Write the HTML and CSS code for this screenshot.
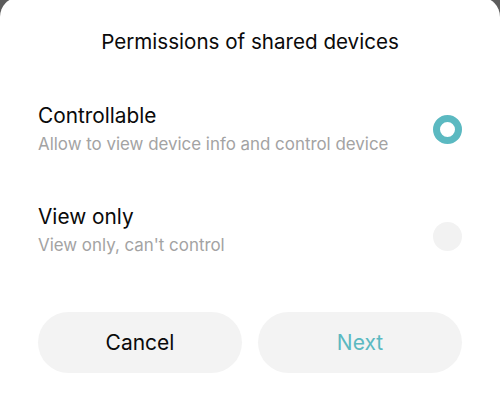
FILE: index.html
```html
<!DOCTYPE html>
<html lang="en">
<head>
<meta charset="utf-8">
<title>Permissions of shared devices</title>
<link rel="stylesheet" href="styles.css">
</head>
<body>
<div class="sheet">
  <h1 class="title">Permissions of shared devices</h1>
  <div class="options">
    <div class="option">
      <div class="option-text">
        <div class="option-name">Controllable</div>
        <div class="option-desc">Allow to view device info and control device</div>
      </div>
      <span class="radio radio-on"></span>
    </div>
    <div class="option option-second">
      <div class="option-text">
        <div class="option-name">View only</div>
        <div class="option-desc">View only, can't control</div>
      </div>
      <span class="radio"></span>
    </div>
  </div>
  <div class="actions">
    <button class="btn btn-cancel">Cancel</button>
    <button class="btn btn-next">Next</button>
  </div>
</div>
</body>
</html>
```
FILE: styles.css
```css
html, body {
  margin: 0;
  padding: 0;
  background: #5c5c5c;
}
body {
  font-family: Inter, Roboto, "Liberation Sans", sans-serif;
  overflow: hidden;
}
.sheet {
  margin-top: -3px;
  background: #ffffff;
  border-radius: 20px 20px 0 0;
  min-height: 420px;
  padding: 31px 38px 0;
  box-sizing: border-box;
}
.title {
  margin: 0;
  font-size: 20.6px;
  line-height: 28px;
  font-weight: 400;
  color: #0a0a0a;
  text-align: center;
}
.options {
  display: flex;
  flex-direction: column;
  gap: 49px;
  margin-top: 47px;
}
.option {
  display: flex;
  align-items: center;
  justify-content: space-between;
}
.option-name {
  font-size: 20.8px;
  line-height: 26px;
  color: #0a0a0a;
}
.option-desc {
  margin-top: 4px;
  font-size: 16.9px;
  line-height: 22px;
  color: #a3a3a3;
}
.radio {
  width: 29px;
  height: 29px;
  border-radius: 50%;
  background: #f2f2f2;
  box-sizing: border-box;
  flex: none;
}
.radio-on {
  background: #ffffff;
  border: 7.5px solid #5bb9c1;
}
.option-second .radio {
  margin-top: 13px;
}
.actions {
  display: flex;
  gap: 16px;
  margin-top: 56px;
}
.btn {
  flex: 1;
  height: 61px;
  border: none;
  border-radius: 31px;
  background: #f3f3f3;
  font-family: inherit;
  font-size: 21px;
  padding: 0;
}
.btn-cancel { color: #0a0a0a; }
.btn-next { color: #5bb9c1; }
```
